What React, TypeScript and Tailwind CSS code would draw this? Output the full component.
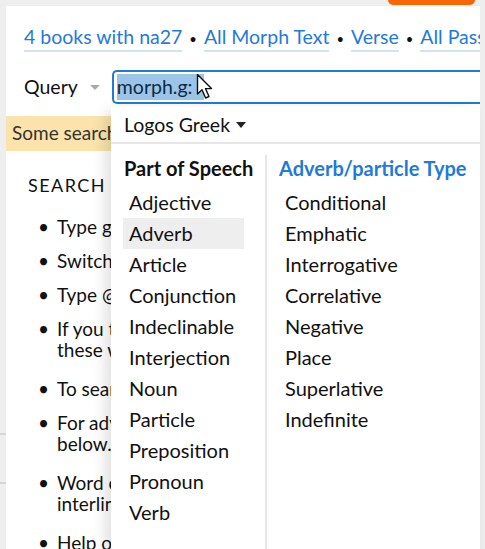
const LINKS = ["4 books with na27", "All Morph Text", "Verse", "All Passages"];

const PARTS = [
  "Adjective",
  "Adverb",
  "Article",
  "Conjunction",
  "Indeclinable",
  "Interjection",
  "Noun",
  "Particle",
  "Preposition",
  "Pronoun",
  "Verb",
];

const ADVERB_TYPES = [
  "Conditional",
  "Emphatic",
  "Interrogative",
  "Correlative",
  "Negative",
  "Place",
  "Superlative",
  "Indefinite",
];

const TIPS = [
  ["Type greek words to search the text, or use the menu below to"],
  ["Switch between reading and searching with the button above"],
  ["Type @ to search for a lemma or root"],
  ["If you type a word in English, we will search for", "these words in the translation instead"],
  ["To search for morphology, type morph: then a code"],
  ["For advanced searches, see the examples", "below. More help is available"],
  ["Word order searches are available in the", "interlinear. Try them out"],
  ["Help on searching is available"],
];

function Cursor() {
  return (
    <svg width="20" height="28" viewBox="0 0 20 28" className="absolute left-[196px] top-[73px]">
      <path
        d="M1.5 1.5 L1.5 21 L6 16.8 L9.6 25 L13 23.5 L9.5 15.6 L15.5 15.6 Z"
        fill="#fff"
        stroke="#111"
        strokeWidth="1.4"
        strokeLinejoin="round"
      />
    </svg>
  );
}

export default function App() {
  return (
    <div
      className="relative h-[549px] w-[485px] overflow-hidden bg-[#eeeeee] text-[#111]"
      style={{ fontFamily: "Lato, 'Noto Sans', sans-serif" }}
    >
      {/* top bar with orange button edge */}
      <div className="flex h-[6px] justify-end pr-[10px]">
        <div className="h-[5px] w-[87px] rounded-b-[6px] bg-[#f76707]" />
      </div>

      <div className="flex h-[543px]">
        {/* left gutter */}
        <div className="flex w-[6px] flex-col bg-[#eeeeee]">
          <div className="h-[427px]" />
          <div className="h-[2px] bg-[#d6d6d6]" />
          <div className="h-[47px]" />
          <div className="h-[2px] bg-[#d6d6d6]" />
        </div>

        {/* main panel */}
        <div className="w-[474px] overflow-hidden bg-white">
          <div className="flex items-center gap-[7px] whitespace-nowrap pl-[18px] pt-[19px] text-[19.5px] leading-[24px]">
            {LINKS.map((l, i) => (
              <div key={l} className="flex items-center gap-[7px]">
                {i > 0 && <span className="text-[13px] text-[#111]">•</span>}
                <span className="border-b-2 border-[#d3e3f6] pb-[1px] text-[#1f7ad8]">{l}</span>
              </div>
            ))}
          </div>

          <div className="mt-[18px] flex h-[34px] items-center">
            <span className="pl-[18px] text-[19.5px]">Query</span>
            <span className="ml-[12px] mr-[12px] h-0 w-0 border-x-[5px] border-t-[5px] border-x-transparent border-t-[#aaaaaa]" />
            <div className="flex h-[34px] flex-1 items-center rounded-l-[5px] border-2 border-r-0 border-[#1f7ad8] pl-[3px]">
              <span className="bg-[#9cc3e8] pr-[12px] text-[19.5px] leading-[26px] text-[#0d2a44]">morph.g:</span>
            </div>
          </div>

          <div className="mt-[12px] flex h-[35px] items-center bg-[#fbe3ab] pl-[6px] text-[19px] text-[#333]">
            Some searches may take a while to complete
          </div>

          <div className="pl-[22px] pt-[21px] text-[18px] tracking-[0.08em]">SEARCH TIPS</div>
          <ul className="mt-[17px] flex flex-col gap-[13px] pl-[51px] pr-[10px] text-[19px] leading-[21px]">
            {TIPS.map((t, i) => (
              <li key={i} className={`relative whitespace-nowrap ${t.length > 1 ? "mb-[5px]" : ""}`}>
                <span className="absolute -left-[19px] top-0">•</span>
                {t.map((line) => (
                  <div key={line}>{line}</div>
                ))}
              </li>
            ))}
          </ul>
        </div>

        {/* right gutter */}
        <div className="w-[5px] bg-[#eeeeee]" />
      </div>

      <Cursor />

      {/* morph picker popup */}
      <div className="absolute left-[111px] top-[107px] h-[460px] w-[369px] rounded-tr-[8px] bg-white shadow-[-6px_4px_14px_rgba(0,0,0,0.12)]">
        <div className="flex h-[37px] items-center gap-[6px] border-b-2 border-[#e6e6e6] pl-[13px] text-[19.5px]">
          Logos Greek
          <span className="h-0 w-0 border-x-[5px] border-t-[6px] border-x-transparent border-t-[#222]" />
        </div>
        <div className="flex pt-[11px]">
          <div className="w-[154px] pl-[12px]">
            <div className="mb-[6px] pl-[1px] text-[20px] font-bold leading-[26px]">Part of Speech</div>
            {PARTS.map((p) => (
              <div
                key={p}
                className={`h-[31px] w-[121px] pl-[6px] text-[20px] leading-[30px] ${p === "Adverb" ? "bg-[#eeeeee]" : ""}`}
              >
                {p}
              </div>
            ))}
          </div>
          <div className="h-[400px] w-[2px] bg-[#e6e6e6]" />
          <div className="pl-[12px]">
            <div className="mb-[6px] text-[20px] font-bold leading-[26px] text-[#1f7ad8]">Adverb/particle Type</div>
            {ADVERB_TYPES.map((p) => (
              <div key={p} className="h-[31px] pl-[6px] text-[20px] leading-[30px]">
                {p}
              </div>
            ))}
          </div>
        </div>
      </div>
    </div>
  );
}
